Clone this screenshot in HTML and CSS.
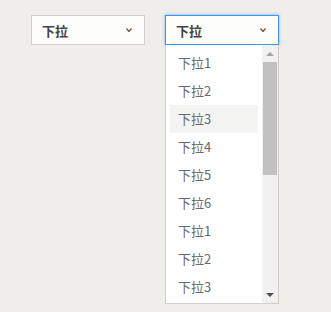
FILE: index.html
```html
<!DOCTYPE html>
<html lang="zh-CN">
<head>
    <meta charset="UTF-8">
    <title>下拉</title>
    <link rel="stylesheet" href="styles.css">
</head>
<body>
    <main class="demo">
        <div class="dropdown">
            <div class="select-box">
                <span class="select-text">下拉</span>
                <svg class="caret" width="6" height="4" viewBox="0 0 6 4"><path d="M0.5 0.5 L3 3.5 L5.5 0.5" fill="none" stroke="#6b5a48" stroke-width="1.3"/></svg>
            </div>
        </div>

        <div class="dropdown open">
            <div class="select-box focus">
                <span class="select-text">下拉</span>
                <svg class="caret" width="6" height="4" viewBox="0 0 6 4"><path d="M0.5 0.5 L3 3.5 L5.5 0.5" fill="none" stroke="#6b5a48" stroke-width="1.3"/></svg>
            </div>
            <div class="listbox">
                <ul class="options">
                    <li>下拉1</li>
                    <li>下拉2</li>
                    <li class="hover">下拉3</li>
                    <li>下拉4</li>
                    <li>下拉5</li>
                    <li>下拉6</li>
                    <li>下拉1</li>
                    <li>下拉2</li>
                    <li>下拉3</li>
                </ul>
                <!-- scrollbar -->
                <div class="scrollbar">
                    <span class="arrow up"></span>
                    <div class="track"><div class="thumb"></div></div>
                    <span class="arrow down"></span>
                </div>
            </div>
        </div>
    </main>
</body>
</html>
```

FILE: styles.css
```css
body {
    margin: 0;
    background-color: #efeeea;
    font-family: "Noto Sans CJK SC", "Liberation Sans", sans-serif;
}

.demo {
    display: flex;
    align-items: flex-start;
    gap: 20px;
    padding: 15px 0 0 31px;
}

.dropdown {
    width: 114px;
}

.select-box {
    box-sizing: border-box;
    height: 30px;
    display: flex;
    align-items: center;
    justify-content: space-between;
    padding: 0 12px 0 10px;
    background-color: #fdfdfb;
    border: 1px solid #d3cfc8;
}

.select-box.focus {
    border-color: #3d97f2;
    box-shadow: 0 0 3px rgba(61, 151, 242, 0.7);
}

.select-text {
    font-size: 13px;
    font-weight: bold;
    color: #444444;
}

.caret {
    display: block;
}

.listbox {
    box-sizing: border-box;
    height: 259px;
    display: flex;
    background-color: #ffffff;
    border: 1px solid #d3cfc8;
    border-top: none;
}

.options {
    flex: 1;
    list-style: none;
    margin: 0;
    padding: 4px;
    overflow: hidden;
}

.options li {
    height: 28px;
    line-height: 28px;
    padding-left: 8px;
    font-size: 13px;
    color: #6a6a6a;
}

.options li.hover {
    background-color: #f3f3f2;
}

.scrollbar {
    width: 16px;
    display: flex;
    flex-direction: column;
    background-color: #f1f1f1;
}

.arrow {
    height: 17px;
    display: flex;
    align-items: center;
    justify-content: center;
}

.arrow::before {
    content: "";
    border-left: 4px solid transparent;
    border-right: 4px solid transparent;
}

.arrow.up::before {
    border-bottom: 4px solid #a3a3a3;
}

.arrow.down::before {
    border-top: 4px solid #505050;
}

.track {
    flex: 1;
    padding: 0 1px;
}

.thumb {
    height: 113px;
    background-color: #c1c1c1;
}
```
